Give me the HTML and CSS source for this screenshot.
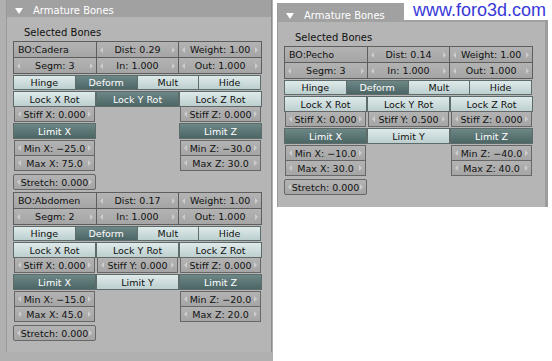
FILE: index.html
```html
<!DOCTYPE html>
<html lang="es">
<head>
  <meta charset="UTF-8" />
  <title>Armature Bones</title>
  <link rel="stylesheet" href="styles.css">
</head>
<body>
  <div class="screen">

    <div class="win win-left">
      <div class="panel">
        <div class="head">
          <svg class="tri" width="8" height="6" viewBox="0 0 8 6"><polygon points="0,0 8,0 4,6" fill="#fff"/></svg>
          <span>Armature Bones</span>
        </div>
        <div class="label">Selected Bones</div>

        <div class="bones">
          <div class="bone">
            <div class="fields">
              <div class="txt">BO:Cadera</div>
              <div class="num">Dist: 0.29</div>
              <div class="num">Weight: 1.00</div>
              <div class="num">Segm: 3</div>
              <div class="num">In: 1.000</div>
              <div class="num">Out: 1.000</div>
            </div>
            <div class="toggles">
              <div class="btn">Hinge</div>
              <div class="btn on">Deform</div>
              <div class="btn">Mult</div>
              <div class="btn">Hide</div>
            </div>
            <div class="axes">
              <div class="axis">
                <div class="btn">Lock X Rot</div>
                <div class="num">Stiff X: 0.000</div>
                <div class="btn on limit">Limit X</div>
                <div class="num">Min X: −25.0</div>
                <div class="num">Max X: 75.0</div>
              </div>
              <div class="axis">
                <div class="btn on">Lock Y Rot</div>
              </div>
              <div class="axis">
                <div class="btn">Lock Z Rot</div>
                <div class="num">Stiff Z: 0.000</div>
                <div class="btn on limit">Limit Z</div>
                <div class="num">Min Z: −30.0</div>
                <div class="num">Max Z: 30.0</div>
              </div>
            </div>
            <div class="num stretch">Stretch: 0.000</div>
          </div>

          <div class="bone">
            <div class="fields">
              <div class="txt">BO:Abdomen</div>
              <div class="num">Dist: 0.17</div>
              <div class="num">Weight: 1.00</div>
              <div class="num">Segm: 2</div>
              <div class="num">In: 1.000</div>
              <div class="num">Out: 1.000</div>
            </div>
            <div class="toggles">
              <div class="btn">Hinge</div>
              <div class="btn on">Deform</div>
              <div class="btn">Mult</div>
              <div class="btn">Hide</div>
            </div>
            <div class="axes">
              <div class="axis">
                <div class="btn">Lock X Rot</div>
                <div class="num">Stiff X: 0.000</div>
                <div class="btn on limit">Limit X</div>
                <div class="num">Min X: −15.0</div>
                <div class="num">Max X: 45.0</div>
              </div>
              <div class="axis">
                <div class="btn">Lock Y Rot</div>
                <div class="num">Stiff Y: 0.000</div>
                <div class="btn limit">Limit Y</div>
              </div>
              <div class="axis">
                <div class="btn">Lock Z Rot</div>
                <div class="num">Stiff Z: 0.000</div>
                <div class="btn on limit">Limit Z</div>
                <div class="num">Min Z: −20.0</div>
                <div class="num">Max Z: 20.0</div>
              </div>
            </div>
            <div class="num stretch">Stretch: 0.000</div>
          </div>
        </div>
      </div>
    </div>

    <div class="win win-right">
      <div class="panel">
        <div class="head">
          <svg class="tri" width="8" height="6" viewBox="0 0 8 6"><polygon points="0,0 8,0 4,6" fill="#fff"/></svg>
          <span>Armature Bones</span>
        </div>
        <div class="label">Selected Bones</div>

        <div class="bones">
          <div class="bone">
            <div class="fields">
              <div class="txt">BO:Pecho</div>
              <div class="num">Dist: 0.14</div>
              <div class="num">Weight: 1.00</div>
              <div class="num">Segm: 3</div>
              <div class="num">In: 1.000</div>
              <div class="num">Out: 1.000</div>
            </div>
            <div class="toggles">
              <div class="btn">Hinge</div>
              <div class="btn on">Deform</div>
              <div class="btn">Mult</div>
              <div class="btn">Hide</div>
            </div>
            <div class="axes">
              <div class="axis">
                <div class="btn">Lock X Rot</div>
                <div class="num">Stiff X: 0.000</div>
                <div class="btn on limit">Limit X</div>
                <div class="num">Min X: −10.0</div>
                <div class="num">Max X: 30.0</div>
              </div>
              <div class="axis">
                <div class="btn">Lock Y Rot</div>
                <div class="num">Stiff Y: 0.500</div>
                <div class="btn limit">Limit Y</div>
              </div>
              <div class="axis">
                <div class="btn">Lock Z Rot</div>
                <div class="num">Stiff Z: 0.000</div>
                <div class="btn on limit">Limit Z</div>
                <div class="num">Min Z: −40.0</div>
                <div class="num">Max Z: 40.0</div>
              </div>
            </div>
            <div class="num stretch">Stretch: 0.000</div>
          </div>
        </div>
      </div>
    </div>

    <div class="mark">www.foro3d.com</div>
  </div>
</body>
</html>
```

FILE: styles.css
```css
* {
  box-sizing: border-box;
}

body {
  margin: 0;
  background: #ffffff;
  font-family: 'DejaVu Sans', sans-serif;
  font-size: 9.5px;
  color: #111;
}

.screen {
  position: relative;
  display: flex;
  align-items: flex-start;
  width: 552px;
  height: 361px;
  overflow: hidden;
}

.win-left {
  width: 273px;
  height: 361px;
  background: #b0b0b0;
  padding-left: 6px;
}

.panel {
  background: #b5b5b5;
  border-left: 1px solid #9a9a9a;
  border-right: 1px solid #8c8c8c;
}

.win-left .panel {
  margin-top: -2px;
  width: 266px;
  height: 354px;
}

.win-right {
  margin-left: 4px;
  margin-top: 3px;
  width: 271px;
  border-right: 3px solid #9c9c9c;
}

.win-right .panel {
  height: 204px;
  border-right: 0;
}

.head {
  display: flex;
  align-items: center;
  height: 19px;
  padding: 6px 0 0 8px;
  background: #a1a1a1;
  color: #fff;
  font-size: 10px;
  line-height: 13px;
}

.tri {
  margin-right: 10px;
}

.label {
  height: 24px;
  padding: 9px 0 0 17px;
  font-size: 10px;
  line-height: 13px;
}

.bones {
  padding-left: 6px;
}

.bone + .bone {
  margin-top: 2px;
}

/* number and text fields */
.num,
.txt {
  display: flex;
  align-items: center;
  height: 16px;
  background: linear-gradient(#b3b3b3, #a5a5a5);
  border: 1px solid #676767;
  white-space: nowrap;
}

.num {
  justify-content: space-between;
  padding: 0 3px;
}

.num::before,
.num::after {
  content: "";
  border-style: solid;
  border-color: transparent;
}

.num::before {
  border-width: 3px 3px 3px 0;
  border-right-color: #cdcdcd;
}

.num::after {
  border-width: 3px 0 3px 3px;
  border-left-color: #cdcdcd;
}

.txt {
  padding-left: 4px;
}

.btn {
  display: flex;
  align-items: center;
  justify-content: center;
  background: linear-gradient(#dfeaea, #bccfcf);
  white-space: nowrap;
}

.btn.on {
  background: linear-gradient(#6d8787, #4c6565);
  color: #fff;
}

.fields {
  display: grid;
  grid-template-columns: repeat(3, 1fr);
  grid-template-rows: 15px 15px;
  gap: 1px;
  width: 249px;
  padding: 1px;
  background: #5e5e5e;
}

.fields .num,
.fields .txt {
  height: auto;
  border: 0;
}

.toggles {
  display: grid;
  grid-template-columns: repeat(4, 1fr);
  grid-template-rows: 13px;
  gap: 1px;
  width: 248px;
  margin-top: 1px;
  padding: 1px;
  background: #5f6c6c;
}

.axes {
  display: grid;
  grid-template-columns: repeat(3, 83px);
  align-items: start;
  margin-top: 1px;
}

.axis {
  display: flex;
  flex-direction: column;
}

.axis .btn {
  height: 16px;
  border: 1px solid #5d6b6b;
}

.axis .num {
  margin: -1px 1px 0;
}

.axis .limit {
  margin-top: 1px;
}

.axis .limit + .num {
  margin-top: 1px;
}

.stretch {
  width: 83px;
  margin-top: 3px;
  border-radius: 2px;
  justify-content: center;
  gap: 1px;
}

.mark {
  position: absolute;
  left: 404px;
  top: 0;
  width: 148px;
  height: 20px;
  padding-left: 9px;
  background: #fff;
  font-family: 'Liberation Sans', Arial, sans-serif;
  font-size: 18px;
  line-height: 20px;
  color: #3838d8;
}
```
